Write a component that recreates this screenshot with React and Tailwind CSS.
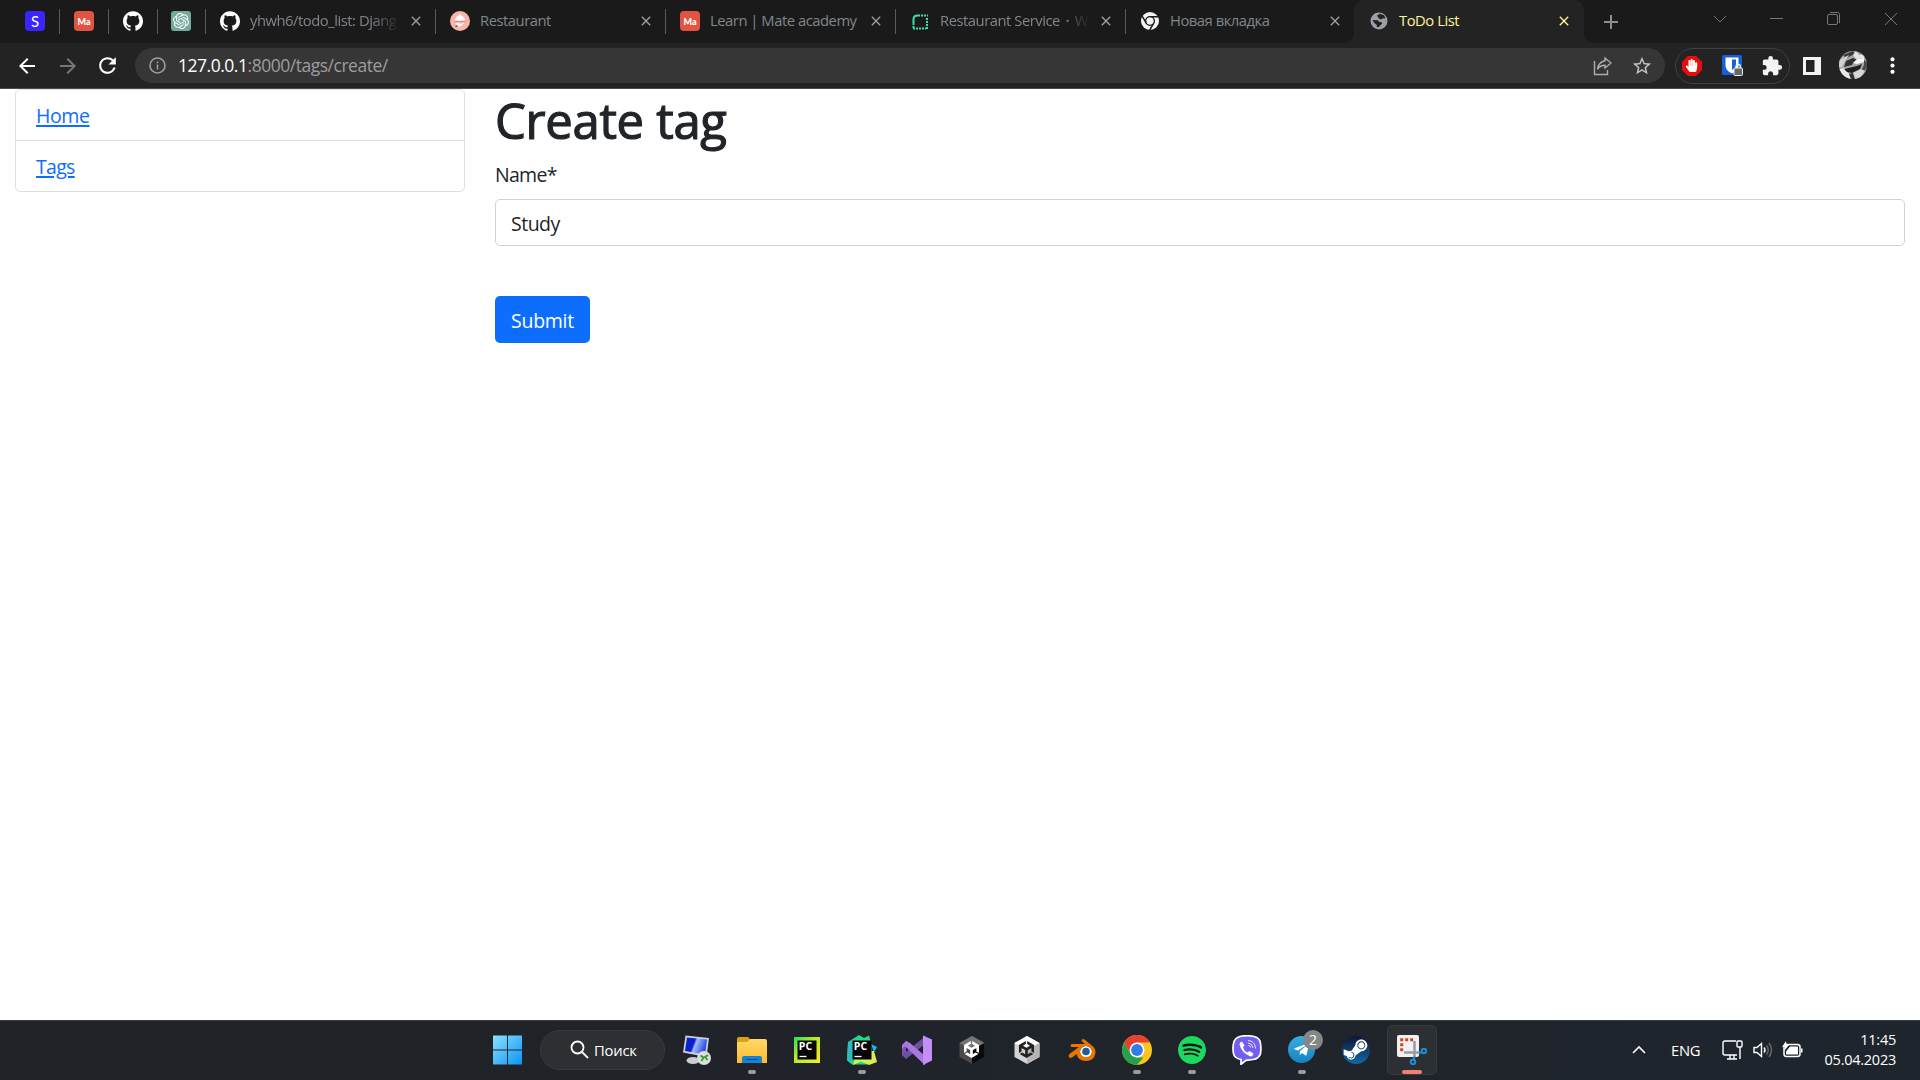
import React from "react";
import { MdArrowBack, MdArrowForward, MdRefresh, MdExtension, MdMoreVert, MdStarBorder, MdClose } from "react-icons/md";
import { SiOpenai, SiUnity, SiSpotify, SiGithub } from "react-icons/si";
import { FaTelegramPlane, FaSteamSymbol, FaHandPaper } from "react-icons/fa";

function SIcon() {
  return <div className="flex size-5 items-center justify-center rounded bg-[#3a25ff] font-['Lato'] text-[15px] leading-none text-white">S</div>;
}

function MateIcon() {
  return <div className="flex size-5 items-center justify-center rounded bg-[#e25442] font-['Lato'] text-[9px] font-black leading-none text-white">Ma</div>;
}

function OpenAiIcon() {
  return (
    <div className="flex size-5 items-center justify-center rounded-[3px] bg-[#74a99b] text-white">
      <SiOpenai size={16} />
    </div>
  );
}

function DishIcon() {
  return (
    <svg width="20" height="20" viewBox="0 0 20 20">
      <circle cx="10" cy="10" r="10" fill="#f9b5a9" />
      <path d="M5 9.500a5 5 0 0 1 10 0z" fill="#fff" />
      <circle cx="10" cy="4.300" r="1" fill="#fff" />
      <path d="M4 10.500h12" stroke="#e58a80" strokeWidth="1" />
      <path d="M5.500 12l4 .3 1.500.7 3.500-1.700-3.500 4-2.500.2-2-1.500z" fill="#fff" />
      <path d="M5.500 15.500l2-.8" stroke="#333" strokeWidth="1.200" />
    </svg>
  );
}

function DottedIcon() {
  return (
    <svg width="20" height="20" viewBox="0 0 20 20" fill="none" stroke="#3ddfa8" strokeWidth="2">
      <path d="M3.500 14V8.500q0-4 4-4H10" />
      <path d="M11 4.500h7M17 7v11M3 17.500h13M3.500 15v2" strokeDasharray="2 1" />
    </svg>
  );
}

function ChromeMono() {
  return (
    <svg width="20" height="20" viewBox="0 0 20 20">
      <circle cx="10" cy="10" r="9" fill="#f1f3f4" />
      <circle cx="10" cy="10" r="4.300" fill="#f1f3f4" stroke="#1a1a1a" strokeWidth="1.500" />
      <path d="M10 5.700h8M6.300 12.200L2.300 5.300M13.700 12.200l-4 7" stroke="#1a1a1a" strokeWidth="1.500" />
      <circle cx="10" cy="10" r="3.400" fill="#f1f3f4" />
    </svg>
  );
}

function Globe() {
  return (
    <svg width="20" height="20" viewBox="0 0 20 20">
      <circle cx="10" cy="10" r="8.500" fill="#9aa0a6" />
      <path d="M3.500 9l5.500.2 1.200 1.800h2.200l.8 1.500-1.500 1.500-2.200 2.300-1.700-.4V14l-2.500-2z" fill="#232323" />
      <path d="M8 4.500l3-1.800 4 1.500 1.500 3-3 .2-2 1L9.500 7z" fill="#232323" />
    </svg>
  );
}

const TABS = [
  { icon: <SiGithub size={20} className="text-white" />, title: "yhwh6/todo_list: Djang", fade: true },
  { icon: <DishIcon />, title: "Restaurant" },
  { icon: <MateIcon />, title: "Learn | Mate academy" },
  { icon: <DottedIcon />, title: <>Restaurant Service<span className="mx-[5.500px] font-bold">·</span>W</>, fade: true },
  { icon: <ChromeMono />, title: "Новая вкладка", last: true },
];

function Separator() {
  return <div className="h-[25px] w-px shrink-0 bg-[#5a5a5a]" />;
}

function PinnedTab({ children, width }) {
  return (
    <div className={"flex shrink-0 items-center justify-between " + width}>
      {children}
      <Separator />
    </div>
  );
}

function Tab({ icon, title, fade, last }) {
  return (
    <div className="flex w-[230px] shrink-0 items-center pl-[14px]">
      {icon}
      <div className={"ml-[10px] w-[151px] shrink-0 whitespace-nowrap pb-[2px] text-[14.800px] tracking-[-0.480px] text-[#80868b] " + (fade ? "[mask-image:linear-gradient(to_right,black_80%,transparent)]" : "")}>
        {title}
      </div>
      <MdClose size={16} className={"shrink-0 text-[#9aa0a6] " + (last ? "ml-[6px]" : "ml-[7px]")} />
      <div className="flex-1" />
      {!last && <Separator />}
    </div>
  );
}

function TabStrip() {
  return (
    <div className="flex h-[43px] items-center bg-[#1a1a1a]">
      <div className="flex h-[43px] items-center pb-px">
        <PinnedTab width="ml-[25px] w-[35px]"><SIcon /></PinnedTab>
        <PinnedTab width="ml-[14px] w-[35px]"><MateIcon /></PinnedTab>
        <PinnedTab width="ml-[14px] w-[35px]"><SiGithub size={20} className="text-white" /></PinnedTab>
        <PinnedTab width="ml-[13px] w-[35px]"><OpenAiIcon /></PinnedTab>
        {TABS.map((t, i) => <Tab key={i} {...t} />)}
      </div>
      <div className="-ml-[12px] flex h-full w-[251px] shrink-0 items-stretch">
        <div className="w-[10px] bg-[#232323]"><div className="h-full rounded-br-[10px] bg-[#1a1a1a]" /></div>
        <div className="flex w-[230px] items-center rounded-t-[10px] bg-[#232323] pb-px pl-[15px]">
          <Globe />
          <div className="ml-[10px] w-[157px] pb-[2px] text-[14.800px] tracking-[-0.480px] text-[#fdf59a]">ToDo List</div>
          <MdClose size={16} className="text-[#fdf59a]" />
        </div>
        <div className="w-[10px] bg-[#232323]"><div className="h-full rounded-bl-[10px] bg-[#1a1a1a]" /></div>
      </div>
      <svg className="ml-[7px] shrink-0" width="18" height="18" viewBox="0 0 18 18" stroke="#8b8f94" strokeWidth="2"><path d="M9 2v14M2 9h14" /></svg>
      <div className="ml-auto flex h-full items-start gap-[43px] pr-[22px] pt-[12px]">
        <svg width="14" height="14" viewBox="0 0 14 14" fill="none" stroke="#777"><path d="M1 4l6 6 6-6" /></svg>
        <svg width="14" height="14" viewBox="0 0 14 14" fill="none" stroke="#777"><path d="M0 6.500h13" /></svg>
        <svg width="14" height="14" viewBox="0 0 14 14" fill="none" stroke="#777"><rect x=".5" y="2.500" width="10" height="10" rx="1.500" /><path d="M3 .5h7.500q2 0 2 2v8.500" /></svg>
        <svg width="14" height="14" viewBox="0 0 14 14" fill="none" stroke="#777"><path d="M1 1l12 12M13 1L1 13" /></svg>
      </div>
    </div>
  );
}

function Avatar() {
  return (
    <svg width="28" height="28" viewBox="0 0 28 28">
      <defs><clipPath id="avatar"><circle cx="14" cy="14" r="14" /></clipPath></defs>
      <g clipPath="url(#avatar)">
        <rect width="28" height="28" fill="#a5a5a5" />
        <path d="M4 4l10-4 2 3-9 4z" fill="#3a3a3a" />
        <path d="M14 4l3-4 3 4 8-1-3 4-8 1z" fill="#e4e4e4" />
        <path d="M0 9l10-5-4 6-3 6H0z" fill="#d0d0d0" />
        <path d="M7 10l7-3 5 2-5 3-1 2-8 2z" fill="#303030" />
        <path d="M18 8l7-1v4l-7 2-4-1z" fill="#f5f5f5" />
        <path d="M25 9l3 2v6l-4 4-2-1 3-6z" fill="#4a4a4a" />
        <path d="M0 18l6-1 4 6 2 5H4z" fill="#e8e8e8" />
        <path d="M5 18l13-3 5-2-2 5-8 4-5-1z" fill="#1f1f1f" />
        <path d="M14 22l8-4 4 2-6 8h-7z" fill="#d6d6d6" />
        <path d="M10 23l4-1 2 6h-4z" fill="#333" />
      </g>
    </svg>
  );
}

function Toolbar() {
  return (
    <div className="flex h-[46px] items-center border-b border-[#4c4c4c] bg-[#232323] text-white">
      <MdArrowBack size={24} className="ml-[15px] shrink-0" />
      <MdArrowForward size={24} className="ml-[17px] shrink-0 text-[#777]" />
      <MdRefresh size={25} className="ml-[15px] shrink-0" />
      <div className="ml-[15px] flex h-[35px] w-[1530px] shrink-0 items-center rounded-full bg-[#363636] pl-[14px] pr-[12px]">
        <svg width="17" height="17" viewBox="0 0 17 17" fill="none" stroke="#9aa0a6" strokeWidth="1.600"><circle cx="8.500" cy="8.500" r="7.500" /><path d="M8.500 7.500v5M8.500 4.500v1.700" /></svg>
        <div className="ml-[12px] flex-1 text-[17.500px] tracking-[-0.480px] text-[#9d9d9d]"><span className="text-white">127.0.0.1</span>:8000/tags/create/</div>
        <svg width="20" height="20" viewBox="0 0 20 20" fill="none" stroke="#adadad" strokeWidth="1.400"><path d="M2.500 5v13.500h13V14" /><path d="M13 2l6 5-6 5V9.300q-5 0-7.500 4Q6.500 6 13 4.800z" /></svg>
        <MdStarBorder size={22} className="ml-[19px] text-[#c4c4c4]" />
      </div>
      <div className="ml-[10px] flex h-[36px] w-[115px] shrink-0 items-center rounded-full border border-[#414141] pl-[6px]">
        <svg className="shrink-0" width="20" height="20" viewBox="0 0 20 20"><path d="M6 0h8l6 6v8l-6 6H6l-6-6V6z" fill="#e80c0c" /></svg>
        <FaHandPaper size={13} className="-ml-[17px] shrink-0 text-white" />
        <svg className="ml-[24px] shrink-0" width="21" height="21" viewBox="0 0 21 21">
          <rect width="20" height="20" rx="1.500" fill="#175ddc" />
          <path d="M3.500 2.500h13v8q0 5-6.500 8-6.500-3-6.500-8z" fill="#fff" /><path d="M10 4.500h4v6q0 2.500-4 4.500z" fill="#175ddc" />
          <rect x="12" y="13" width="8.500" height="7.500" rx="1" fill="#666" stroke="#eee" /><path d="M14 13v-1.500a2.200 2.200 0 0 1 4.400 0V13" fill="none" stroke="#eee" strokeWidth="1.300" />
        </svg>
        <MdExtension size={22} className="ml-[18px] shrink-0 text-[#f1f3f4]" />
      </div>
      <svg className="ml-[13px] shrink-0" width="18" height="18" viewBox="0 0 18 18"><path d="M0 0h18v18H0zM3 3v12h8.500V3z" fill="#f1f3f4" fillRule="evenodd" /></svg>
      <div className="ml-[18px] shrink-0 pb-px"><Avatar /></div>
      <MdMoreVert size={25} className="ml-[13px] shrink-0" />
    </div>
  );
}

function Page() {
  return (
    <main className="flex min-h-0 flex-1 items-start gap-[30px] bg-white px-[15px] text-[19.500px] tracking-[-0.500px] text-[#212529]">
      <nav className="w-[450px] rounded-[5px] border border-[#dfdfdf] text-[#0d6efd] underline decoration-2 underline-offset-[2px]">
        <div className="flex h-[51px] items-center border-b border-[#dfdfdf] px-5 pt-px tracking-[-0.400px]"><a>Home</a></div>
        <div className="flex h-[50px] items-center px-5 pt-px tracking-[-0.700px]"><a>Tags</a></div>
      </nav>
      <section className="flex flex-1 flex-col items-start">
        <h1 className="h-[61px] text-[49px] leading-[63px] tracking-[-0.300px] [-webkit-text-stroke:1.2px_#212529]">Create tag</h1>
        <label className="mt-[9px] h-[30px] leading-[32px] tracking-[-0.700px]">Name*</label>
        <div className="mt-[10px] h-[47px] w-full rounded-[5px] border border-[#ced4da] px-[15px] leading-[48px]">Study</div>
        <button className="mt-[50px] h-[47px] w-[95px] whitespace-nowrap rounded-[5px] bg-[#0d6efd] pt-[3px] tracking-[-0.250px] text-white">Submit</button>
      </section>
    </main>
  );
}

function WindowsLogo() {
  return (
    <svg width="30" height="30" viewBox="0 0 30 30">
      <defs><linearGradient id="win" x1="0" y1="0" x2="1" y2="1"><stop stopColor="#8be2ff" /><stop offset="1" stopColor="#0c93f5" /></linearGradient></defs>
      <path d="M1 .500h14v14H1zM16 .500h14v14H16zM1 15.500h14v14H1zM16 15.500h14v14H16z" fill="url(#win)" />
    </svg>
  );
}

function RemoteDesktop() {
  return (
    <svg width="30" height="30" viewBox="0 0 30 30">
      <defs><linearGradient id="rd" x1="0" x2="1" y2=".3"><stop stopColor="#0824c5" /><stop offset=".45" stopColor="#0b1fcf" /><stop offset=".55" stopColor="#a4bcff" /><stop offset="1" stopColor="#2c4ce0" /></linearGradient></defs>
      <ellipse cx="11" cy="25.500" rx="6.500" ry="3.500" fill="#c9ccd0" />
      <path d="M3.500 0.500L27 3l-2.500 19L1 17.500z" fill="#c7d0dd" />
      <path d="M5 2.500L25 4.500 23 19.500 3 16z" fill="url(#rd)" />
      <circle cx="22" cy="23" r="7" fill="#ddd" />
      <path d="M18.500 20.500l3 2-2 3.500M26 20l-3 2 2.500 3" fill="none" stroke="#2b9b35" strokeWidth="1.700" />
    </svg>
  );
}

function Explorer() {
  return (
    <svg width="30" height="30" viewBox="0 0 30 30">
      <defs><linearGradient id="fold" x2="0" y2="1"><stop stopColor="#ffda67" /><stop offset="1" stopColor="#fcbc2d" /></linearGradient></defs>
      <path d="M0 4q0-2 2-2h9l3 3-2 6H0z" fill="#e09f12" />
      <path d="M0 7h10l3.500-3H28q2 0 2 2v22H0z" fill="url(#fold)" />
      <path d="M5 28v-5q0-2 2-2h16q2 0 2 2v5z" fill="#1583d3" /><path d="M9 24.500h12" stroke="#0d4f8e" />
    </svg>
  );
}

function PyCharm({ community }) {
  return (
    <svg width="30" height="30" viewBox="0 0 30 30">
      <defs><linearGradient id="pc" x2="1" y2="1"><stop stopColor="#20e268" /><stop offset=".4" stopColor="#b4e927" /><stop offset="1" stopColor="#f6ec2a" /></linearGradient></defs>
      {community ? (
        <g><path d="M1 7l11-7 5 3 5-2.500 2 7 2 20-6 2H5l-5-4z" fill="#21d789" /><path d="M1 9l5-5v22l-6-1z" fill="#31b8bd" /><path d="M24 9l6 3-3 5z" fill="#12bdf5" /><path d="M24 16h3l3 11-8 3-8-3.500L6 30l2-6z" fill="#d9ec50" /></g>
      ) : <rect x="2" y="2" width="26" height="26" fill="url(#pc)" />}
      <rect x="5.500" y="5.500" width="19" height="19" fill="#060606" />
      <text x="6.800" y="15" fill="#fff" fontSize="10.500" fontWeight="700" fontFamily="Open Sans, sans-serif">PC</text>
      <path d="M7.500 21.500h7" stroke="#fff" strokeWidth="1.300" />
    </svg>
  );
}

function VisualStudio() {
  return (
    <svg width="30" height="30" viewBox="0 0 30 30">
      <path d="M0 10l4-2v14l-4-2z" fill="#7452b8" /><path d="M0 20l20-16 3-4v9L4 24z" fill="#71519f" />
      <path d="M4 6l-4 4v4l3-3 20 19v-9z" fill="#a675e0" /><path d="M4 6l4 2 15 13v9L3 11z" fill="#a878e0" />
      <path d="M21 30V.500L30 4.500v21z" fill="#c58ef6" />
    </svg>
  );
}

function UnityHex({ light }) {
  return (
    <div className="grid place-items-center">
      <svg className="col-start-1 row-start-1" width="28" height="30" viewBox="0 0 28 30">
        <path d="M14 1l12.500 7v14L14 29 1.500 22V8z" fill={light ? "#d4d4d4" : "#4a4a4a"} />
        <path d="M14 1l12.500 7L14 15 1.500 8z" fill={light ? "#fff" : "#757575"} />
        <path d="M26.500 8v14L14 29V15z" fill={light ? "#b5b5b5" : "#090909"} />
      </svg>
      <SiUnity size={17} className={"col-start-1 row-start-1 " + (light ? "text-[#222]" : "text-white")} />
    </div>
  );
}

function Blender() {
  return (
    <svg width="28" height="24" viewBox="0 0 28 24">
      <circle cx="18" cy="14" r="6" fill="#fff" />
      <circle cx="18" cy="13.500" r="3.800" fill="#235d94" />
      <path d="M14 1.500q1-1 2.500 0L25 8.500q3 3 2.400 7-1.400 7.500-9.400 7.500-8 0-9.400-7L4 19.500q-2 1-3-.500t.500-3L11 9H4q-1.500 0-1.500-1.500T4.500 6H17l-3-2.500q-1-1 0-2zM18 8a6 5.500 0 1 0 0 11 6 5.500 0 0 0 0-11z" fill="#ea7600" fillRule="evenodd" />
    </svg>
  );
}

function ChromeColor() {
  return (
    <svg width="30" height="30" viewBox="0 0 30 30">
      <circle cx="15" cy="15" r="15" fill="#fcc420" />
      <path d="M2 7.500A15 15 0 0 1 28 7.500H15l-6.500 11.300z" fill="#e83f31" />
      <path d="M2 7.500L8.500 18.800 15 22.500h6.500L15 30A15 15 0 0 1 2 7.500z" fill="#26a04a" />
      <circle cx="15" cy="15" r="7.500" fill="#fff" /><circle cx="15" cy="15" r="5.900" fill="#2f7de9" />
    </svg>
  );
}

function Viber() {
  return (
    <svg width="30" height="30" viewBox="0 0 30 30">
      <path d="M8 1.500Q15 0 22 1.500q6 1.500 6.500 7 .8 6 0 10-1.500 5.500-7.500 6l-7 .8-5 4v-4.800Q2 23 1.500 18.500q-1-6 0-10Q2.500 3 8 1.500z" fill="#735df2" stroke="#fff" strokeWidth="1.700" />
      <path d="M10 6.500l2.500 4-1.500 2q1 3.500 4.500 5l2-1.500 4 2.500q-.5 3-3 3Q9.500 18 7.500 9.500 7.500 7 10 6.500z" fill="#fff" />
      <path d="M16 5.500q7 .5 7.500 8M16 8q4.500.5 5 5M16.500 10.500q2 0 2 2" stroke="#fff" fill="none" strokeWidth=".8" />
    </svg>
  );
}

function Snip() {
  return (
    <svg width="30" height="30" viewBox="0 0 30 30">
      <rect x="0" y="0" width="22" height="22" rx="2" fill="#f1f1f3" />
      <path d="M4.700 3.200v13" fill="none" stroke="#d24512" strokeWidth="3" strokeDasharray="3 2" />
      <path d="M8.200 4.700h8" fill="none" stroke="#d24512" strokeWidth="3" strokeDasharray="3 2" />
      <path d="M7 17.500h15M17.500 6v16" stroke="#969da5" strokeWidth="2.500" fill="none" />
      <circle cx="27" cy="16" r="2.300" fill="none" stroke="#1793dc" strokeWidth="1.900" />
      <circle cx="16" cy="27" r="2.300" fill="none" stroke="#1793dc" strokeWidth="1.900" />
      <path d="M16.800 24.500l.8-3M22 18l3-1" stroke="#1793dc" strokeWidth="2" />
    </svg>
  );
}

function TaskbarApp({ children, running }) {
  return (
    <div className="relative flex h-[60px] w-[55px] shrink-0 items-center justify-center">
      {children}
      {running && <div className="absolute bottom-[6px] h-[4px] w-[8px] rounded-full bg-[#9a9b9c]" />}
    </div>
  );
}

function Taskbar() {
  return (
    <footer className="flex h-[60px] items-center border-t border-[#3a3d3f] bg-linear-to-r from-[#202327] to-[#1f252d] pb-[2px] text-white">
      <div className="ml-[492px]"><WindowsLogo /></div>
      <div className="ml-[18px] flex h-[40px] w-[125px] shrink-0 items-center rounded-full border border-[#37393d] bg-[#2d2f33] pl-[29px] text-[14.800px] tracking-[-0.200px]">
        <svg width="19" height="19" viewBox="0 0 19 19" fill="none" stroke="#fff" strokeWidth="1.800"><circle cx="7.500" cy="7.500" r="6" /><path d="M12 12l6 6" /></svg>
        <span className="ml-[5px] pt-px">Поиск</span>
      </div>
      <div className="ml-[4px] flex">
        <TaskbarApp><RemoteDesktop /></TaskbarApp>
        <TaskbarApp running><Explorer /></TaskbarApp>
        <TaskbarApp><PyCharm /></TaskbarApp>
        <TaskbarApp running><PyCharm community /></TaskbarApp>
        <TaskbarApp><VisualStudio /></TaskbarApp>
        <TaskbarApp><UnityHex /></TaskbarApp>
        <TaskbarApp><UnityHex light /></TaskbarApp>
        <TaskbarApp><Blender /></TaskbarApp>
        <TaskbarApp running><ChromeColor /></TaskbarApp>
        <TaskbarApp running><div className="rounded-full bg-[#0b1a10] text-[#1ed760]"><SiSpotify size={28} /></div></TaskbarApp>
        <TaskbarApp><Viber /></TaskbarApp>
        <TaskbarApp running>
          <div className="flex size-[27px] items-center justify-center rounded-full bg-linear-to-b from-[#37aee2] to-[#1583c2]"><FaTelegramPlane size={17} /></div>
          <div className="absolute right-[6px] top-[10px] flex size-5 items-center justify-center rounded-full bg-[#858687] text-[14px]">2</div>
        </TaskbarApp>
        <TaskbarApp><div className="mr-[2px] flex size-[28px] items-center justify-center overflow-hidden rounded-full bg-linear-to-b from-[#0c1638] to-[#0c6aa5]"><FaSteamSymbol size={27} /></div></TaskbarApp>
        <TaskbarApp>
          <div className="flex size-[50px] items-center justify-center rounded-[5px] border border-[#36393d] bg-[#2c2f33]"><Snip /></div>
          <div className="absolute bottom-[6px] h-[4px] w-[20px] rounded-full bg-[#f6806a]" />
        </TaskbarApp>
      </div>
      <div className="ml-auto flex items-center pr-[24px] text-[14.800px]">
        <svg width="14" height="9" viewBox="0 0 14 9" fill="none" stroke="#fff" strokeWidth="1.600"><path d="M1 8l6-6 6 6" /></svg>
        <span className="ml-[25px] w-[31px] pt-px tracking-[-0.300px]">ENG</span>
        <svg className="ml-[20px]" width="21" height="20" viewBox="0 0 21 20" fill="none" stroke="#fff" strokeWidth="1.400"><path d="M14 1H3Q1 1 1 3v10q0 2 2 2h12M5 19h10M8 15v4M12 15v4M18 7v12" /><rect x="15" y="1" width="5" height="6" rx="1" /></svg>
        <svg className="ml-[10px]" width="20" height="18" viewBox="0 0 20 18" fill="none" stroke="#fff" strokeWidth="1.400"><path d="M1 6.500v5h3l4.500 4V2.500L4 6.500zM11 6.500q2 2.500 0 5" /><path d="M13.500 4.500q3.500 4.500 0 9M16 2q5 7 0 14" stroke="#666b70" /></svg>
        <svg className="ml-[9px]" width="21" height="18" viewBox="0 0 21 18"><rect x="2" y="3.500" width="16" height="12" rx="2.500" fill="none" stroke="#fff" strokeWidth="1.500" /><path d="M8 5.500h8v8H4v-3z" fill="#fff" /><path d="M19 7.500h1.500v4H19zM4 0l-4 6h3l-1 4 5-6H4.500z" fill="#fff" /></svg>
        <div className="ml-[20px] w-[73px] whitespace-nowrap text-right text-[14.500px] leading-[20px] tracking-[-0.250px]">11:45<br />05.04.2023</div>
      </div>
    </footer>
  );
}

export default function App() {
  return (
    <div className="flex h-screen w-screen flex-col overflow-hidden bg-white font-['Open_Sans',sans-serif]">
      <TabStrip />
      <Toolbar />
      <Page />
      <Taskbar />
    </div>
  );
}
